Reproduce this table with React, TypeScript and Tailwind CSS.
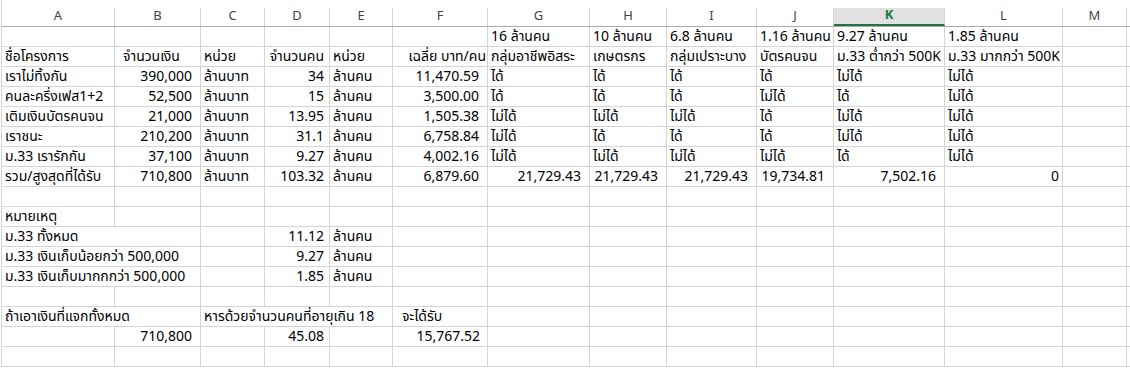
import React from "react";

type Cell = { t?: string; r?: boolean; span?: number; pl?: string; pr?: string };

// column widths incl. right gridline
const widths = [113, 86, 64, 65, 63, 95, 102, 77, 90, 77, 111, 118, 64];
const letters = ["A", "B", "C", "D", "E", "F", "G", "H", "I", "J", "K", "L", "M"];

const n = (t: string, pr = "pr-[8px]"): Cell => ({ t, r: true, pr });
const s = (t: string, extra: Partial<Cell> = {}): Cell => ({ t, ...extra });
const e: Cell = {};

const ok = "ได้";
const no = "ไม่ได้";

const rows: Cell[][] = [
  [e, e, e, e, e, e, s("16 ล้านคน"), s("10 ล้านคน"), s("6.8 ล้านคน"), s("1.16 ล้านคน"), s("9.27 ล้านคน"), s("1.85 ล้านคน"), e],
  [s("ชื่อโครงการ"), s("จำนวนเงิน", { pl: "pl-[8px]" }), s("หน่วย"), n("จำนวนคน", "pr-[5px]"), s("หน่วย"), n("เฉลี่ย บาท/คน", "pr-[1px]"), s("กลุ่มอาชีพอิสระ"), s("เกษตรกร"), s("กลุ่มเปราะบาง"), s("บัตรคนจน"), s("ม.33 ต่ำกว่า 500K"), s("ม.33 มากกว่า 500K"), e],
  [s("เราไม่ทิ้งกัน"), n("390,000"), s("ล้านบาท"), n("34", "pr-[5px]"), s("ล้านคน"), n("11,470.59"), s(ok), s(ok), s(ok), s(ok), s(no), s(no), e],
  [s("คนละครึ่งเฟส1+2"), n("52,500"), s("ล้านบาท"), n("15", "pr-[5px]"), s("ล้านคน"), n("3,500.00"), s(ok), s(ok), s(ok), s(no), s(ok), s(no), e],
  [s("เติมเงินบัตรคนจน"), n("21,000"), s("ล้านบาท"), n("13.95", "pr-[5px]"), s("ล้านคน"), n("1,505.38"), s(no), s(no), s(no), s(ok), s(no), s(no), e],
  [s("เราชนะ"), n("210,200"), s("ล้านบาท"), n("31.1", "pr-[5px]"), s("ล้านคน"), n("6,758.84"), s(no), s(ok), s(ok), s(ok), s(no), s(no), e],
  [s("ม.33 เรารักกัน"), n("37,100"), s("ล้านบาท"), n("9.27", "pr-[5px]"), s("ล้านคน"), n("4,002.16"), s(no), s(no), s(no), s(no), s(ok), s(no), e],
  [s("รวม/สูงสุดที่ได้รับ"), n("710,800"), s("ล้านบาท"), n("103.32", "pr-[5px]"), s("ล้านคน"), n("6,879.60"), n("21,729.43"), n("21,729.43"), n("21,729.43"), n("19,734.81"), n("7,502.16"), n("0", "pr-[3px]"), e],
  [e, e, e, e, e, e, e, e, e, e, e, e, e],
  [s("หมายเหตุ"), e, e, e, e, e, e, e, e, e, e, e, e],
  [s("ม.33 ทั้งหมด", { span: 2 }), e, n("11.12", "pr-[5px]"), s("ล้านคน"), e, e, e, e, e, e, e, e],
  [s("ม.33 เงินเก็บน้อยกว่า 500,000", { span: 2 }), e, n("9.27", "pr-[5px]"), s("ล้านคน"), e, e, e, e, e, e, e, e],
  [s("ม.33 เงินเก็บมากกกว่า 500,000", { span: 2 }), e, n("1.85", "pr-[5px]"), s("ล้านคน"), e, e, e, e, e, e, e, e],
  [e, e, e, e, e, e, e, e, e, e, e, e, e],
  [s("ถ้าเอาเงินที่แจกทั้งหมด", { span: 2 }), s("หารด้วยจำนวนคนที่อายุเกิน 18", { span: 3 }), s("จะได้รับ", { pl: "pl-[9px]" }), e, e, e, e, e, e, e],
  [e, n("710,800"), e, n("45.08", "pr-[5px]"), e, n("15,767.52", "pr-[7px]"), e, e, e, e, e, e, e],
  [e, e, e, e, e, e, e, e, e, e, e, e, e],
];

const Row = ({ cells }: { cells: Cell[] }) => {
  let col = 0;
  return (
    <div className="flex h-[20px] border-b border-[#d4d4d4]">
      {cells.map((c, i) => {
        const span = c.span ?? 1;
        const w = widths.slice(col, col + span).reduce((a, b) => a + b, 0);
        col += span;
        return (
          <div
            key={i}
            style={{ width: w }}
            className={`shrink-0 h-full border-r border-[#d4d4d4] flex items-end pb-[1px] whitespace-nowrap overflow-visible ${
              c.r ? `justify-end ${c.pr ?? "pr-[4px]"}` : `justify-start ${c.pl ?? "pl-[3px]"}`
            }`}
          >
            <span className="leading-[17px]">{c.t}</span>
          </div>
        );
      })}
      <div className="flex-1" />
    </div>
  );
};

export default function App() {
  return (
    <div
      className="w-[1130px] h-[369px] overflow-hidden bg-white text-[14px] text-black"
      style={{ fontFamily: "Tahoma, 'Noto Sans Thai', 'Noto Sans', 'Liberation Sans', sans-serif" }}
    >
      <div className="ml-[1px] border-l border-[#d4d4d4] pt-[8px]">
        {/* column letters */}
        <div className="flex h-[19px] border-b border-[#ababab]">
          {letters.map((l, i) => (
            <div
              key={l}
              style={{ width: widths[i] }}
              className={`shrink-0 h-full border-r border-[#d4d4d4] flex items-center justify-center text-[13px] ${
                l === "K"
                  ? "bg-[#e1e1e1] text-[#217346] font-bold border-b-2 border-b-[#217346]"
                  : "text-[#444]"
              }`}
            >
              {l}
            </div>
          ))}
          <div className="flex-1" />
        </div>
        {rows.map((r, i) => (
          <Row key={i} cells={r} />
        ))}
      </div>
    </div>
  );
}
